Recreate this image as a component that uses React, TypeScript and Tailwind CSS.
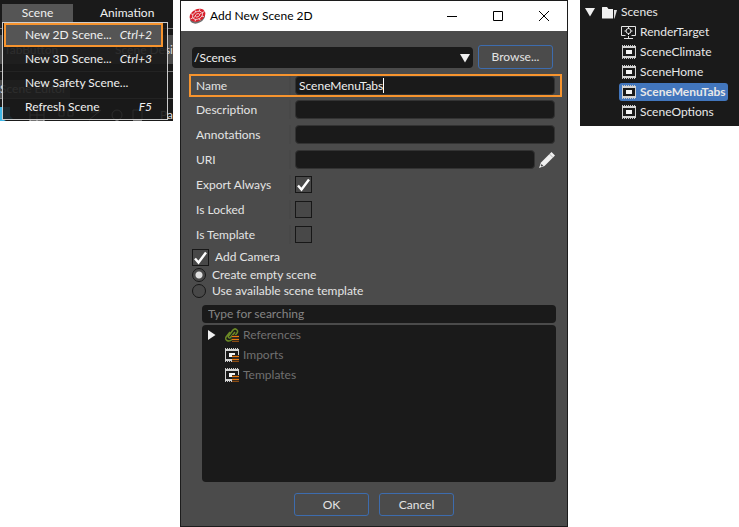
import { useState } from 'react'
import type { ReactNode } from 'react'

const MENU_ITEMS = [
  { label: 'New 2D Scene...', shortcut: 'Ctrl+2', active: true },
  { label: 'New 3D Scene...', shortcut: 'Ctrl+3' },
  { label: 'New Safety Scene...', shortcut: '' },
  { label: 'Refresh Scene', shortcut: 'F5' },
]

const SCENES = ['SceneClimate', 'SceneHome', 'SceneMenuTabs', 'SceneOptions']

const DEFAULT_NAME = 'SceneMenuTabs'

function SceneIcon({ linked = false }: { linked?: boolean }) {
  return (
    <svg width="14" height="14" viewBox="0 0 14 14" className="shrink-0" shapeRendering="crispEdges" aria-hidden="true">
      <path d="M0 0h1v1H0zM2 0h1v1H2zM4 0h1v1H4zM6 0h1v1H6zM8 0h1v1H8zM10 0h1v1h-1zM12 0h1v1h-1zM0 13h1v1H0zM2 13h1v1H2zM4 13h1v1H4zM6 13h1v1H6zM8 13h1v1H8zM10 13h1v1h-1zM12 13h1v1h-1z" fill="#c8c8c8" />
      <path d="M0 1h14v12H0z" fill="#d4d4d4" />
      <path d="M1 3h12v8H1z" fill="#1a1a1a" />
      <path d="M4 5h6v4H4z" fill="#f2f2f2" />
      {linked && <LinkMark />}
    </svg>
  )
}

function LinkMark() {
  return (
    <>
      <path d="M7 7h7v7H7z" fill="#3a2a1c" />
      <path d="M7 8h7v1H7zM7 11h7v1H7z" fill="#e87a10" />
      <path d="M7 13h7v1H7z" fill="#8a4c14" />
    </>
  )
}

function RenderTargetIcon() {
  return (
    <svg width="15" height="14" viewBox="0 0 15 14" className="shrink-0" fill="none" stroke="#e4e4e4" aria-hidden="true">
      <path d="M4.5 10.5h-4v-9h14v9h-4M3 13.500h9M7.500 11v2" />
      <circle cx="7.500" cy="6" r="2.500" />
      <path d="M7.500 2v2M7.500 8v2M3.500 6h2M9.500 6h2" />
    </svg>
  )
}

function FolderIcon() {
  return (
    <svg width="15" height="13" viewBox="0 0 15 13" className="shrink-0" aria-hidden="true">
      <path d="M0 1.500Q0 1 .5 1H5l1.500 2H11v9.500H.5Q0 12.500 0 12z" fill="#f0f0f0" />
      <path d="M12 4h3l-2.500 8.500H12z" fill="#dcdcdc" />
    </svg>
  )
}

function ClipIcon() {
  return (
    <svg width="14" height="14" viewBox="0 0 14 14" className="shrink-0" fill="none" aria-hidden="true">
      <path d="M10 4L5.500 9.500Q4.500 10.500 3.700 9.500T4 7.500L8 2Q9.500 0 11.500 1.500T12 5L7 11.500Q4.500 14 2 12.500T1.500 8.500L5 4" stroke="#6c8a25" strokeWidth="1.500" />
      <LinkMark />
    </svg>
  )
}

function LogoIcon() {
  return (
    <svg width="17" height="16" viewBox="0 0 17 16" className="shrink-0" aria-hidden="true">
      <ellipse cx="8.500" cy="9.500" rx="8" ry="5.500" transform="rotate(-28 8.500 9.500)" fill="#6f6f6f" />
      <ellipse cx="8.500" cy="7.300" rx="8.300" ry="6" transform="rotate(-28 8.500 7.300)" fill="#d9202c" />
      <g fill="none" stroke="#f3e2e3" strokeWidth=".8" transform="rotate(-28 8.500 7.300)">
        <ellipse cx="8.500" cy="7.300" rx="5.300" ry="3.700" />
        <ellipse cx="8.500" cy="7.300" rx="2.200" ry="1.500" />
        <path d="M8.500 1.500v2M8.500 11v2M.5 7.300h3M13.500 7.300h3M3.500 3l1.500 1.500M13.500 3L12 4.500M3.500 11.500L5 10M13.500 11.500L12 10M6 7.300H4M11 7.300h2" />
      </g>
    </svg>
  )
}

function PencilIcon() {
  return (
    <svg width="16" height="16" viewBox="0 0 16 16" aria-hidden="true">
      <path d="M12.500 0L16 3.500 5.500 14 0 16 2 10.500z" fill="#f0f0f0" />
      <path d="M10.500 2l3.500 3.500" stroke="#8a8a8a" strokeWidth=".6" />
      <path d="M2.500 12l1.800 1.800-1.800.7-.8-.8z" fill="#4b4b4b" />
    </svg>
  )
}

function Triangle({ right = false }: { right?: boolean }) {
  return (
    <svg width="10" height="10" viewBox="0 0 10 10" className="shrink-0" fill="#f0f0f0" aria-hidden="true">
      <path d={right ? 'M1 0L8.500 5 1 10z' : 'M0 1h10L5 9.500z'} />
    </svg>
  )
}

function CheckBox({ id, defaultChecked }: { id: string; defaultChecked?: boolean }) {
  const [on, setOn] = useState(!!defaultChecked)
  return (
    <span className="relative block size-[17px] shrink-0">
      <input
        id={id}
        type="checkbox"
        checked={on}
        onChange={e => setOn(e.target.checked)}
        className="block size-[17px] appearance-none border border-[#171717] bg-[#484848]"
      />
      {on && (
        <svg viewBox="0 0 17 17" className="pointer-events-none absolute inset-0" fill="none" stroke="#fff" strokeWidth="2.400" aria-hidden="true">
          <path d="M3 9.500L6.500 13.500 14 3.500" />
        </svg>
      )}
    </span>
  )
}

function FormRow({ id, label, active, children }: { id: string; label: string; active?: boolean; children: ReactNode }) {
  return (
    <div className={`ml-2 mr-[5px] flex h-[23px] items-center border-2 pr-[5px] ${active ? 'mt-0.5 border-[#f7942e]' : 'my-px border-transparent'}`}>
      <label htmlFor={id} className="mr-1 w-[100px] border-r-2 border-[#484848] pl-[5px] leading-[19px]">{label}</label>
      {children}
    </div>
  )
}

const FIELD = 'h-[19px] min-w-0 flex-1 rounded-sm border border-[#333] bg-[#1a1a1a] px-[3px] leading-4 text-[#f0f0f0] outline-none'

function SceneMenu() {
  return (
    <section className="relative h-[121px] w-[173px] shrink-0 overflow-hidden bg-[#1a1a1a]">
      <nav className="flex h-[22px] pl-0.5 pt-1 text-[#f0f0f0]">
        <button className="w-[71px] bg-[#555] leading-[18px]">Scene</button>
        <button className="ml-[27px] leading-[18px]">Animation</button>
      </nav>
      {/* editor behind the open menu */}
      <div className="flex flex-col whitespace-nowrap text-[#ddd]" aria-hidden="true">
        <div className="mt-1.5 h-px bg-[#777]" />
        <div className="mt-1.5 flex h-[29px] items-center justify-between bg-[#4b4b4b]">
          <span className="pl-1">TabButton</span>
          <span>Scene Desi</span>
        </div>
        <div className="mt-[7px] h-px bg-[#777]" />
        <div className="mt-2 h-[18px] w-[70px] bg-[#4b4b4b] leading-[18px]">Scene Editor</div>
        <div className="h-px bg-[#777]" />
        <div className="mt-2 flex h-4 items-center justify-between">
          <svg width="14" height="16" viewBox="0 0 14 16"><path d="M0 0h10v9l4 4H6l-6 3z" fill="#3fb8e8" /></svg>
          <svg width="120" height="14" viewBox="0 0 120 14" fill="none" stroke="#ccc">
            <path d="M3 1h14v12H3zM10 1v12M3 7h14M32 3h5v5h-5zM41 3h5v5h-5zM62 12l12-10M64 4h8M106 2h9v10h-9z" />
            <circle cx="90" cy="7" r="5" />
          </svg>
          <span>Pa</span>
        </div>
      </div>
      <ul className="absolute left-0.5 top-[22px] h-[98px] w-[166px] border border-[#ccc] bg-[#1a1a1a]/90 pl-px text-[#f0f0f0]">
        {MENU_ITEMS.map(item => (
          <li key={item.label} className={`mr-1 flex h-6 items-center border-2 ${item.active ? 'border-[#f7942e] bg-[#555]' : 'border-transparent'}`}>
            <button className="flex flex-1 items-center justify-between pl-[19px] pr-[9px] leading-5">
              <span>{item.label}</span>
              <i>{item.shortcut}</i>
            </button>
          </li>
        ))}
      </ul>
    </section>
  )
}

function SceneDialog() {
  const [name, setName] = useState(DEFAULT_NAME)
  const [touched, setTouched] = useState(false)
  const [mode, setMode] = useState('empty')
  const radio = 'size-[14px] appearance-none rounded-full border border-[#171717] bg-[#484848] checked:bg-[radial-gradient(circle,#dedede_3px,#484848_4px)]'

  return (
    <section role="dialog" aria-label="Add New Scene 2D" className="flex min-h-screen min-w-0 flex-1 flex-col border border-[#1c1c1c] bg-[#4b4b4b] text-[#e4e4e4]">
      <header className="flex h-[30px] items-center bg-white pl-2 text-black">
        <LogoIcon />
        <h1 className="ml-1 flex-1">Add New Scene 2D</h1>
        <button aria-label="Minimize" className="flex w-[46px] justify-center">
          <svg width="10" height="10" viewBox="0 0 10 10" stroke="#000"><path d="M0 5.500h10" /></svg>
        </button>
        <button aria-label="Maximize" className="flex w-[46px] justify-center">
          <svg width="10" height="10" viewBox="0 0 10 10" stroke="#000" fill="none"><path d="M.5.5h9v9h-9z" /></svg>
        </button>
        <button aria-label="Close" className="flex w-[46px] justify-center">
          <svg width="10" height="10" viewBox="0 0 10 10" stroke="#000"><path d="M0 0l10 10M10 0L0 10" /></svg>
        </button>
      </header>

      <div className="flex items-center gap-[5px] pb-[3px] pl-[11px] pr-[14px] pt-[14px]">
        <div className="relative flex-1">
          <select aria-label="Location" className="block h-[21px] w-full appearance-none rounded-sm bg-[#1a1a1a] px-0.5 leading-[21px] text-[#f0f0f0]">
            <option>/Scenes</option>
          </select>
          <span className="pointer-events-none absolute right-[3px] top-1.5"><Triangle /></span>
        </div>
        <button className="h-6 w-[75px] rounded-[3px] border border-[#3d6cae]">Browse...</button>
      </div>

      <FormRow id="name" label="Name" active>
        <div className="relative flex min-w-0 flex-1">
          <input
            id="name"
            value={name}
            onChange={e => { setName(e.target.value); setTouched(true) }}
            autoFocus
            className={FIELD}
          />
          {!touched && <span className="pointer-events-none absolute left-[88px] top-0.5 h-[15px] w-px bg-white" />}
        </div>
      </FormRow>
      <FormRow id="description" label="Description">
        <input id="description" className={FIELD} />
      </FormRow>
      <FormRow id="annotations" label="Annotations">
        <input id="annotations" className={FIELD} />
      </FormRow>
      <FormRow id="uri" label="URI">
        <input id="uri" className={FIELD} />
        <button aria-label="Edit URI" className="ml-1"><PencilIcon /></button>
      </FormRow>
      <FormRow id="export" label="Export Always"><CheckBox id="export" defaultChecked /></FormRow>
      <FormRow id="locked" label="Is Locked"><CheckBox id="locked" /></FormRow>
      <FormRow id="template" label="Is Template"><CheckBox id="template" /></FormRow>

      <div className="flex h-5 items-center gap-1.5 pl-[11px]">
        <CheckBox id="camera" defaultChecked />
        <label htmlFor="camera">Add Camera</label>
      </div>
      <label className="flex h-4 items-center gap-1.5 pl-[11px]">
        <input type="radio" name="mode" checked={mode === 'empty'} onChange={() => setMode('empty')} className={radio} />
        Create empty scene
      </label>
      <label className="flex h-4 items-center gap-1.5 pl-[11px]">
        <input type="radio" name="mode" checked={mode === 'template'} onChange={() => setMode('template')} className={radio} />
        Use available scene template
      </label>

      <input
        type="search"
        aria-label="Search templates"
        placeholder="Type for searching"
        className="ml-[21px] mr-[11px] mt-1.5 h-[18px] rounded-sm bg-[#1a1a1a] px-1.5 leading-[18px] outline-none placeholder:text-[#858585]"
      />
      <ul className="ml-[21px] mr-[11px] mt-0.5 flex-1 rounded-sm bg-[#1a1a1a] text-[#707070]">
        <li className="flex h-5 items-center pl-[5px]">
          <Triangle right />
          <span className="ml-2 flex items-center gap-1"><ClipIcon />References</span>
        </li>
        <li className="flex h-5 items-center gap-1 pl-[23px]"><SceneIcon linked />Imports</li>
        <li className="flex h-5 items-center gap-1 pl-[23px]"><SceneIcon linked />Templates</li>
      </ul>

      <footer className="flex justify-center gap-2.5 pb-2.5 pt-[11px]">
        <button className="h-[23px] w-[75px] rounded-[3px] border border-[#3d6cae]">OK</button>
        <button className="h-[23px] w-[75px] rounded-[3px] border border-[#3d6cae]">Cancel</button>
      </footer>
    </section>
  )
}

function SceneTree() {
  return (
    <section className="ml-3 h-[126px] w-[159px] shrink-0 bg-[#1a1a1a] pt-0.5 text-[#e8e8e8]">
      <ul>
        <li className="flex h-5 items-center pl-[5px]">
          <Triangle />
          <span className="ml-[7px] flex items-center gap-1"><FolderIcon />Scenes</span>
        </li>
        <li className="ml-[39px] flex h-5 items-center gap-1 pl-0.5"><RenderTargetIcon />RenderTarget</li>
        {SCENES.map(scene => (
          <li key={scene} className="ml-[39px] flex h-5 items-center">
            <span className={`flex h-[18px] items-center gap-1 rounded-[3px] pl-[3px] pr-0.5 ${scene === 'SceneMenuTabs' ? 'bg-[#4276bd] font-bold' : ''}`}>
              <SceneIcon />
              {scene}
            </span>
          </li>
        ))}
      </ul>
    </section>
  )
}

export default function App() {
  return (
    <main className="flex min-h-screen items-start bg-white font-['Lato','Noto_Sans',sans-serif] text-[12px] leading-4">
      <SceneMenu />
      <div className="w-[7px] shrink-0" />
      <SceneDialog />
      <SceneTree />
    </main>
  )
}
